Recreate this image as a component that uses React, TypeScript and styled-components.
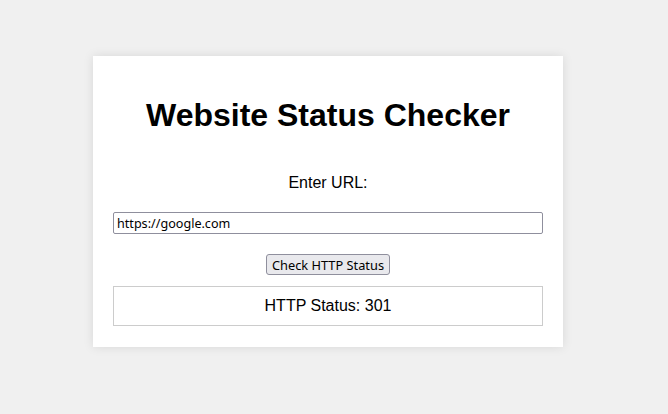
import { createGlobalStyle, styled } from "styled-components";

const GlobalStyle = createGlobalStyle`
  body {
    margin: 0;
    background: #f0f0f0;
    font-family: "Liberation Sans", Arial, sans-serif;
  }
`;

const Page = styled.div`
  display: flex;
  align-items: flex-start;
  padding: 56px 0 0 93px;
  min-height: 414px;
  box-sizing: border-box;
`;

const Card = styled.div`
  width: 430px;
  padding: 20px 20px 21px;
  background: #fff;
  box-shadow: 0 0 10px rgba(0, 0, 0, 0.1);
  text-align: center;
`;

const Title = styled.h1`
  margin: 21px 0 0;
  font-size: 32px;
  font-weight: 700;
  line-height: 37px;
  color: #000;
`;

const Label = styled.label`
  display: block;
  margin-top: 40px;
  font-size: 16px;
  line-height: 18px;
  color: #000;
`;

const UrlInput = styled.input`
  display: block;
  box-sizing: border-box;
  width: 430px;
  height: 22px;
  margin-top: 20px;
  padding: 0 3px;
  border: 1px solid #8f8f9d;
  border-radius: 2px;
  font-family: "Noto Sans", sans-serif;
  font-size: 12.6px;
  line-height: 18px;
  color: #000;
  background: #fff;
`;

const CheckButton = styled.button`
  display: inline-block;
  box-sizing: border-box;
  width: 124px;
  height: 21px;
  margin-top: 20px;
  padding: 0;
  border: 1px solid #8f8f9d;
  border-radius: 3px;
  background: #e9e9ed;
  font-family: "Noto Sans", sans-serif;
  font-size: 12.8px;
  line-height: 18px;
  color: #000;
  cursor: pointer;
`;

const Result = styled.div`
  margin-top: 11px;
  padding: 10px;
  border: 1px solid #ccc;
  font-size: 16px;
  line-height: 18px;
  color: #000;
`;

export default function App() {
  return (
    <>
      <GlobalStyle />
      <Page>
        <Card>
          <Title>Website Status Checker</Title>
          <Label htmlFor="url">Enter URL:</Label>
          <UrlInput id="url" type="text" defaultValue="https://google.com" />
          <CheckButton type="button">Check HTTP Status</CheckButton>
          <Result>HTTP Status: 301</Result>
        </Card>
      </Page>
    </>
  );
}
